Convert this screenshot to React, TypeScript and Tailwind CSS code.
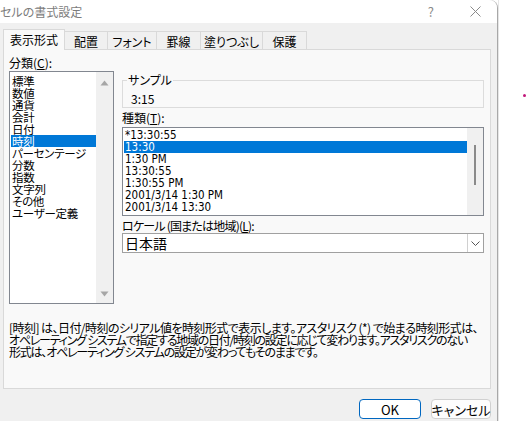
import React from 'react';

const CATEGORIES = ['標準', '数値', '通貨', '会計', '日付', '時刻', 'パーセンテージ', '分数', '指数', '文字列', 'その他', 'ユーザー定義'];
const TYPES = ['*13:30:55', '13:30', '1:30 PM', '13:30:55', '1:30:55 PM', '2001/3/14 1:30 PM', '2001/3/14 13:30'];

const TABS = [
  { label: '表示形式', w: 'w-[62px]' },
  { label: '配置', w: 'w-[43px]' },
  { label: 'フォント', w: 'w-[49px]' },
  { label: '罫線', w: 'w-[44px]' },
  { label: '塗りつぶし', w: 'w-[62px]' },
  { label: '保護', w: 'w-[44px]' },
];

const ArrowUp = () => (
  <svg width="9" height="6" viewBox="0 0 9 6"><path d="M0.5 5.5 L4.5 0.5 L8.5 5.5 Z" fill="#a6a6a6" /></svg>
);
const ArrowDown = () => (
  <svg width="9" height="6" viewBox="0 0 9 6"><path d="M0.5 0.5 L4.5 5.5 L8.5 0.5 Z" fill="#a6a6a6" /></svg>
);

export default function App() {
  return (
    <div className="relative flex h-[421px] w-[529px] overflow-hidden bg-white font-[family-name:'Noto_Sans_CJK_JP',sans-serif] text-[12px] text-black [font-feature-settings:'palt']">
      {/* Dialog */}
      <div className="flex h-full w-[498px] flex-col rounded-tr-[8px] border-r border-[#a8a8a8] bg-[#f0f0f0]">
        {/* Title bar */}
        <div className="flex h-[23px] items-center rounded-tr-[8px] bg-white">
          <span className="text-[12px] leading-[14px] text-[#7c7c7c]">セルの書式設定</span>
          <span className="ml-auto mr-[36px] text-[13px] leading-none text-[#8a8a8a]">?</span>
          <svg className="mr-[16px]" width="11" height="11" viewBox="0 0 11 11">
            <path d="M0.5 0.5 L10.5 10.5 M10.5 0.5 L0.5 10.5" stroke="#8a8a8a" strokeWidth="1" />
          </svg>
        </div>

        {/* Tabs */}
        <div className="mt-[6px] flex h-[20px] items-end pl-[3px]">
          {TABS.map((t, i) =>
            i === 0 ? (
              <div key={t.label} className={`${t.w} relative z-10 -mb-px flex h-[21px] items-start justify-center whitespace-nowrap border-x border-t border-[#d9d9d9] bg-[#f9f9f9] pt-[3px] leading-[14px]`}>
                {t.label}
              </div>
            ) : (
              <div key={t.label} className={`${t.w} flex h-[18px] items-start justify-center whitespace-nowrap border-t border-r border-[#d9d9d9] bg-[#f0f0f0] pt-[3px] leading-[14px]`}>
                {t.label}
              </div>
            )
          )}
        </div>

        {/* Panel */}
        <div className="ml-[3px] flex h-[340px] w-[488px] flex-col border border-[#d9d9d9] bg-[#f9f9f9] pl-[5px] pt-[7px]">
          <div className="flex items-start gap-[8px]">
            {/* Category list */}
            <div className="flex w-[105px] flex-col">
              <div className="h-[14px] leading-[12px]">
                分類(<span className="underline">C</span>):
              </div>
              <div className="flex h-[233px] border border-[#828790] bg-white">
                <div className="flex flex-1 flex-col pl-px pt-[3px]">
                  {CATEGORIES.map((c) => (
                    <div key={c} className={`h-[12px] whitespace-nowrap pl-px text-[11.5px] leading-[12px] tracking-[-0.3px] ${c === '時刻' ? 'bg-[#0078d7] text-white' : ''}`}>
                      {c}
                    </div>
                  ))}
                </div>
                <div className="flex w-[17px] flex-col items-center justify-between bg-[#f0f0f0] pb-[6px] pt-[8px]">
                  <ArrowUp />
                  <ArrowDown />
                </div>
              </div>
            </div>

            {/* Right column */}
            <div className="flex w-[363px] flex-col">
              <div className="relative mt-[23px] h-[28px] w-[362px] border border-[#dcdcdc] pl-[8px] pt-[9px]">
                <span className="absolute -top-[8px] left-[4px] bg-[#f9f9f9] px-px leading-[14px]">サンプル</span>
                <span className="leading-[12px]">3:15</span>
              </div>
              <div className="mt-[3px] h-[16px] leading-[14px]">
                種類(<span className="underline">T</span>):
              </div>
              <div className="flex h-[89px] w-[362px] border border-[#828790] bg-white">
                <div className="flex flex-1 flex-col pl-px pt-px">
                  {TYPES.map((t, i) => (
                    <div key={t + i} className={`h-[12px] whitespace-pre pl-px font-[family-name:'DejaVu_Sans_Condensed','Liberation_Sans',sans-serif] text-[11.5px] leading-[12px] ${i === 1 ? 'bg-[#0078d7] text-white' : ''}`}>
                      {t}
                    </div>
                  ))}
                </div>
                <div className="flex w-[16px] justify-center bg-[#f0f0f0] pt-[17px]">
                  <div className="h-[40px] w-[2px] bg-[#8a8a8a]" />
                </div>
              </div>
              <div className="mt-[3px] h-[14px] whitespace-nowrap leading-[14px] tracking-[-0.8px]">
                ロケール (国または地域)(<span className="underline">L</span>):
              </div>
              <div className="flex h-[20px] w-[362px] items-center border border-[#a0a0a0] bg-white">
                <span className="pl-[2px] text-[14px] leading-[14px]">日本語</span>
                <div className="ml-auto flex h-[18px] w-[16px] items-center justify-center border-l border-[#d0d0d0]">
                  <svg width="9" height="5" viewBox="0 0 9 5">
                    <path d="M0.5 0.5 L4.5 4.5 L8.5 0.5" fill="none" stroke="#555" strokeWidth="1" />
                  </svg>
                </div>
              </div>
            </div>
          </div>

          {/* Description */}
          <div className="mt-[18px] flex flex-col whitespace-nowrap text-[12px] leading-[12px]">
            <span className="tracking-[-0.55px]">[時刻] は、日付/時刻のシリアル値を時刻形式で表示します。アスタリスク (*) で始まる時刻形式は、</span>
            <span className="tracking-[-1.25px]">オペレーティング システムで指定する地域の日付/時刻の設定に応じて変わります。アスタリスクのない</span>
            <span className="tracking-[-1.2px]">形式は、オペレーティング システムの設定が変わってもそのままです。</span>
          </div>
        </div>

        {/* Buttons */}
        <div className="mt-[10px] flex justify-end gap-[10px] pr-[6px]">
          <button className="flex h-[20px] w-[62px] items-center justify-center rounded-[4px] border border-[#0067c0] bg-white text-[13px] leading-none">
            OK
          </button>
          <button className="flex h-[20px] w-[60px] items-center justify-center whitespace-nowrap rounded-[4px] border border-[#d0d0d0] bg-[#fdfdfd] text-[13px] leading-none">
            キャンセル
          </button>
        </div>
      </div>

      <div className="w-px bg-[#e6e6e6]" />
      <div className="absolute left-[523px] top-[94px] h-[3px] w-[3px] rounded-full bg-[#c2187a]" />
    </div>
  );
}
